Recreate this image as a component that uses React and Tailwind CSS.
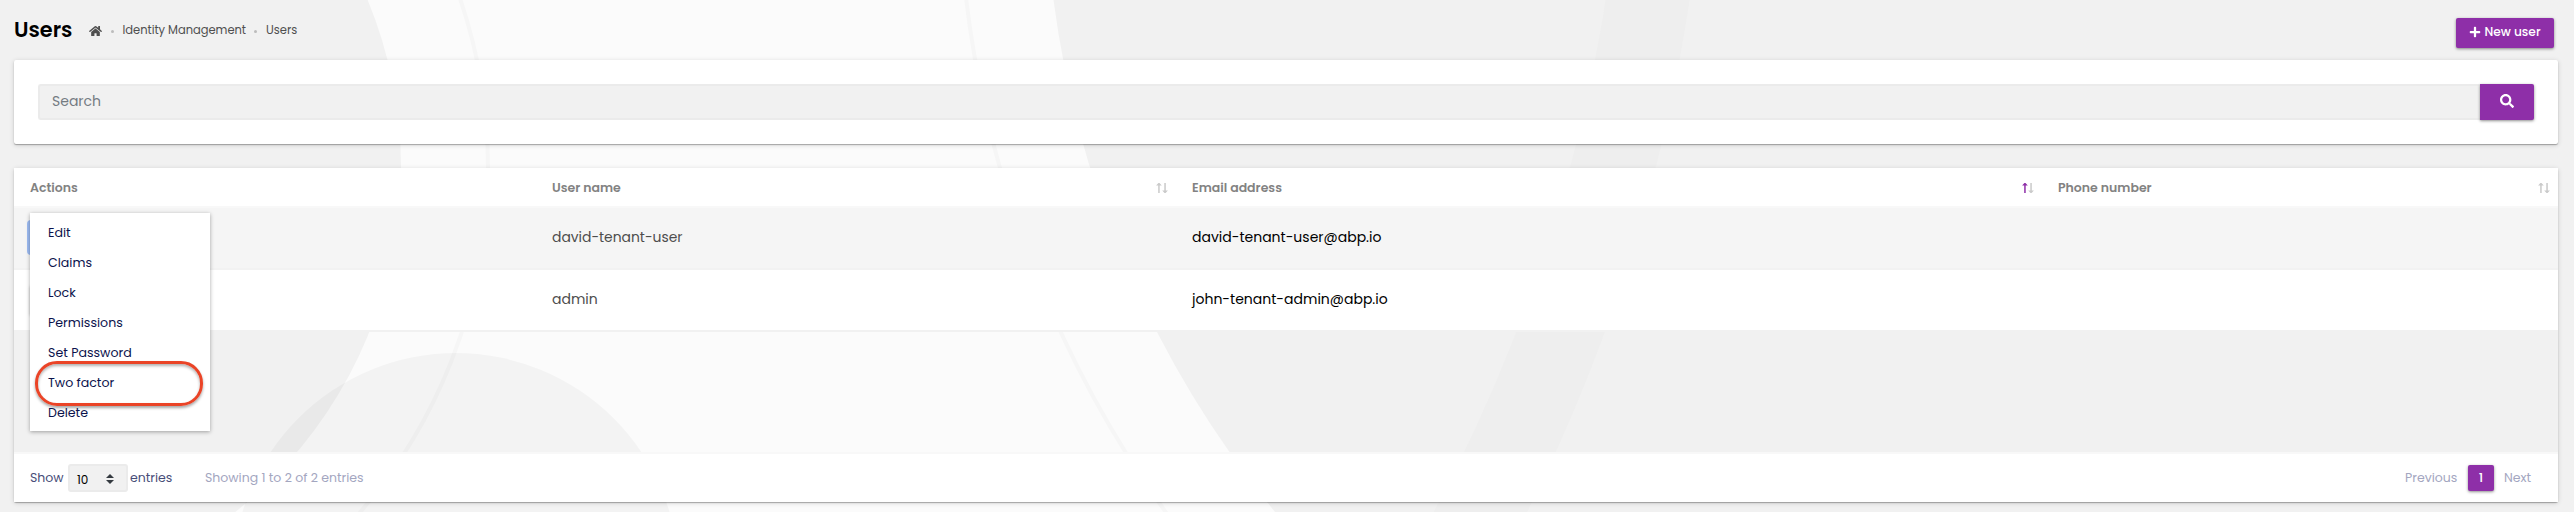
import { FaHome, FaPlus, FaSearch } from "react-icons/fa";

const users = [
  { name: "david-tenant-user", email: "david-tenant-user@abp.io" },
  { name: "admin", email: "john-tenant-admin@abp.io" },
];

const actions = ["Edit", "Claims", "Lock", "Permissions", "Set Password", "Two factor", "Delete"];

const columns = [
  { label: "Actions" },
  { label: "User name", sortable: true },
  { label: "Email address", sortable: true, ascending: true },
  { label: "Phone number", sortable: true },
];

const cardShadow = "shadow-[0_1px_1px_rgba(0,0,0,0.28),0_1px_5px_rgba(0,0,0,0.16)]";
const tableGrid = "grid grid-cols-[522px_640px_866px_516px]";

function Backdrop() {
  return (
    <svg className="absolute inset-0" width="2574" height="512" viewBox="0 0 2574 512" fill="none">
      <rect width="2574" height="512" fill="#fbfbfb" />
      <circle cx="-39" cy="168" r="527" stroke="#f6f6f6" strokeWidth="4" />
      <circle cx="2062" cy="-132" r="1103.5" stroke="#f6f6f6" strokeWidth="4" />
      <circle cx="-39" cy="168" r="440" fill="#f1f1f1" />
      <path d="M1053.5 0A1017 1017 0 0 0 1275 512H2574V0Z" fill="#f1f1f1" />
      <circle cx="5" cy="-253" r="1662" stroke="#eeeeee" strokeWidth="83" />
      <circle cx="456" cy="576" r="223" fill="#000" fillOpacity="0.032" />
    </svg>
  );
}

function SortArrows({ ascending }) {
  return (
    <svg width="12" height="10" viewBox="0 0 12 10" fill="none" className="-mt-px">
      <path d="M2.4 0h1.1L5.8 2.5H3.7V10H2.2V2.5H.1z" fill={ascending ? "#8e2fa8" : "#cacaca"} />
      <path d="M8.3 0H9.8V7.5H11.9L9.6 10H8.5L6.2 7.5H8.3z" fill="#cacaca" />
    </svg>
  );
}

function ActionMenu() {
  return (
    <div className="absolute top-[5px] left-4 z-10 flex h-[218px] w-[180px] flex-col bg-white pt-[5px] shadow-[0_1px_4px_rgba(0,0,0,0.35)]">
      {actions.map((action) => (
        <div key={action} className="relative flex h-[30px] items-center pl-[18px] text-[12.6px] text-[#0b124c]">
          {action}
          {action === "Two factor" && (
            <span className="absolute top-[-7px] left-[5px] h-[45px] w-[168px] rounded-[22px] border-3 border-[#ea4427] shadow-[0_2px_3px_rgba(0,0,0,0.35),inset_0_2px_3px_rgba(0,0,0,0.3)]" />
          )}
        </div>
      ))}
    </div>
  );
}

export default function App() {
  return (
    <div className="relative h-[512px] w-[2574px] overflow-hidden font-[Poppins,Inter,sans-serif]">
      <Backdrop />
      <div className="relative flex h-full flex-col px-[14px] pr-4">
        <header className="flex h-[60px] items-start justify-between pr-1">
          <div className="flex h-[60px] items-center">
            <h1 className="w-[75px] text-[20.8px] font-semibold text-black">Users</h1>
            <nav className="flex items-center pt-[2px] text-[11.5px] text-[#4f4f4f]">
              <FaHome className="mb-px h-[12px] w-[13px]" />
              <span className="ml-[8.5px] size-[3px] rounded-full bg-[#bcbcbc]" />
              <span className="ml-[9px] tracking-[-0.03px]">Identity Management</span>
              <span className="ml-[8px] size-[3px] rounded-full bg-[#bcbcbc]" />
              <span className="ml-[9px]">Users</span>
            </nav>
          </div>
          <button className="mt-[18px] flex h-[30px] w-[98px] items-center justify-center rounded-xs bg-[#8e2fa8] pb-[2px] text-[12.2px] font-medium text-white shadow-[0_1px_3px_rgba(0,0,0,0.45)]">
            <FaPlus className="mr-[3px] size-[12px]" />
            New user
          </button>
        </header>

        <section className={"flex h-[84px] rounded-xs bg-white p-6 " + cardShadow}>
          <div className="flex h-9 flex-1 items-center rounded-l-[3px] border-2 border-r-0 border-[#ebebeb] bg-[#f1f1f1] pb-[2px] pl-3 text-[14px] text-[#747b82]">
            Search
          </div>
          <button className="flex h-9 w-[54px] items-center justify-center rounded-r-xs bg-[#8e2fa8] pb-[2px] text-white shadow-[0_1px_3px_rgba(0,0,0,0.45)]">
            <FaSearch className="size-[14px]" />
          </button>
        </section>

        <section className={"mt-6 flex h-[334px] flex-col rounded-xs " + cardShadow}>
          <div className={"h-10 border-b-2 border-[#f8f8f8] bg-white " + tableGrid}>
            {columns.map((column) => (
              <div key={column.label} className="flex items-center justify-between pt-[2px] pr-2 pl-4 text-[12.5px] font-semibold text-[#828282]">
                {column.label}
                {column.sortable && <SortArrows ascending={column.ascending} />}
              </div>
            ))}
          </div>
          <div className="relative">
            <div className={"h-[62px] items-center border-b-2 border-[#f2f2f2] bg-[#f5f5f5] " + tableGrid}>
              <div className="pl-[13px]">
                <div className="mb-[2px] h-[35px] w-[90px] rounded-[4px] bg-[#9dbcf3]" />
              </div>
              <div className="pb-[2px] pl-4 text-[13.9px] text-[#4d4d4d]">{users[0].name}</div>
              <div className="pb-[2px] pl-4 text-[14px] text-black">{users[0].email}</div>
            </div>
            <div className={"h-[62px] items-center border-b-2 border-[#f1f1f1] bg-white " + tableGrid}>
              <div className="pl-4">
                <div className="h-[30px] w-[90px] rounded-xs bg-white shadow-[0_1px_3px_rgba(0,0,0,0.25)]" />
              </div>
              <div className="pb-[2px] pl-4 text-[14px] text-[#4d4d4d]">{users[1].name}</div>
              <div className="pb-[2px] pl-4 text-[14px] text-black">{users[1].email}</div>
            </div>
            <ActionMenu />
          </div>
          <div className="h-[120px]" />
          <footer className="flex h-[50px] items-center justify-between border-t-2 border-[#f8f8f8] bg-white px-4 text-[12.5px]">
            <div className="flex items-center text-[#474d78]">
              <span className="w-[38px]">Show</span>
              <span className="flex h-7 w-[60px] items-center justify-between rounded-[3px] border-2 border-[#ebebeb] bg-[#f1f1f1] pt-[3px] pr-3 pl-[7px] text-[12px] text-black">
                10
                <svg width="8" height="10" viewBox="0 0 8 10" className="mb-[2px]" fill="#343a40">
                  <path d="M4 0L8 4H0zM4 10L0 6H8z" />
                </svg>
              </span>
              <span className="ml-[2px] w-[75px]">entries</span>
              <span className="text-[#a3a6bf]">Showing 1 to 2 of 2 entries</span>
            </div>
            <div className="flex items-center text-[#a3a6bf]">
              <span className="w-[63px]">Previous</span>
              <span className="flex h-[26px] w-[26px] items-center justify-center rounded-xs bg-[#8e2fa8] font-medium text-white shadow-[0_1px_3px_rgba(0,0,0,0.45)]">
                1
              </span>
              <span className="w-[48px] pl-[10px]">Next</span>
            </div>
          </footer>
        </section>
      </div>
    </div>
  );
}
